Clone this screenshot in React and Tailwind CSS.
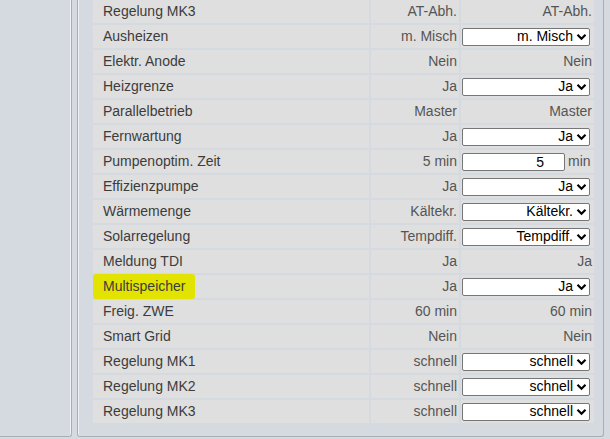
import React from 'react';

const rows = [
    { label: 'Regelung MK3', value: 'AT-Abh.', kind: 'text' },
    { label: 'Ausheizen', value: 'm. Misch', kind: 'select' },
    { label: 'Elektr. Anode', value: 'Nein', kind: 'text' },
    { label: 'Heizgrenze', value: 'Ja', kind: 'select' },
    { label: 'Parallelbetrieb', value: 'Master', kind: 'text' },
    { label: 'Fernwartung', value: 'Ja', kind: 'select' },
    { label: 'Pumpenoptim. Zeit', value: '5 min', kind: 'input', input: '5', unit: 'min' },
    { label: 'Effizienzpumpe', value: 'Ja', kind: 'select' },
    { label: 'Wärmemenge', value: 'Kältekr.', kind: 'select' },
    { label: 'Solarregelung', value: 'Tempdiff.', kind: 'select' },
    { label: 'Meldung TDI', value: 'Ja', kind: 'text' },
    { label: 'Multispeicher', value: 'Ja', kind: 'select', marked: true },
    { label: 'Freig. ZWE', value: '60 min', kind: 'text' },
    { label: 'Smart Grid', value: 'Nein', kind: 'text' },
    { label: 'Regelung MK1', value: 'schnell', kind: 'select' },
    { label: 'Regelung MK2', value: 'schnell', kind: 'select' },
    { label: 'Regelung MK3', value: 'schnell', kind: 'select' },
];

const Chevron = () => (
    <svg width="11" height="8" viewBox="0 0 11 8" className="ml-[3px] mr-[2px]">
        <path d="M1.5 1.8 L5.5 5.8 L9.5 1.8" fill="none" stroke="#000" strokeWidth="2.2" />
    </svg>
);

const FakeSelect = ({ value }) => (
    <div className="ml-px h-[18px] w-[128px] flex items-center justify-end bg-white border border-[#767676] rounded-[2px] text-black">
        <span>{value}</span>
        <Chevron />
    </div>
);

const Setting = ({ row }) => {
    if (row.kind === 'select') return <FakeSelect value={row.value} />;
    if (row.kind === 'input')
        return (
            <div className="ml-px flex items-center">
                <div className="h-[18px] w-[103px] bg-white border border-[#767676] rounded-[2px] text-black text-right pr-[20px] leading-[16px]">
                    {row.input}
                </div>
                <span className="ml-[3px] text-[#555]">{row.unit}</span>
            </div>
        );
    return <div className="w-full text-right pr-[2px] text-[#555]">{row.value}</div>;
};

export default function App() {
    return (
        <div
            className="w-[610px] h-[439px] overflow-hidden flex bg-[#d5d9e0] text-[14px]"
            style={{ fontFamily: '"Liberation Sans", Arial, sans-serif' }}
        >
            <div className="w-[72px] h-[437px] shrink-0 border-r border-b border-[#a9aeb6] rounded-br-[3px] shadow-[inset_-1px_0_0_#eef0f3]" />
            <div className="ml-[5px] w-[527px] h-[437px] shrink-0 border-l border-r border-b border-[#a9aeb6] rounded-b-[3px] shadow-[inset_1px_0_0_#eef0f3] pl-[15px] pr-[9px]">
                <div className="flex flex-col gap-[2px]">
                    {rows.map((row, i) => (
                        <div key={i} className="flex gap-[2px] h-[23px]">
                            <div className="relative w-[276px] bg-[#dfdfdf] flex items-center pl-[10px] text-[#3c3c3c]">
                                {row.marked && (
                                    <div className="absolute left-0 top-[-1px] bottom-[-1px] w-[102px] bg-[#e3e300] rounded-[3px]" />
                                )}
                                <span className="relative">{row.label}</span>
                            </div>
                            <div className="w-[88px] bg-[#dfdfdf] flex items-center justify-end pr-[2px] text-[#555]">
                                {row.value}
                            </div>
                            <div className="w-[133px] bg-[#dfdfdf] flex items-center">
                                <Setting row={row} />
                            </div>
                        </div>
                    ))}
                </div>
            </div>
        </div>
    );
}
